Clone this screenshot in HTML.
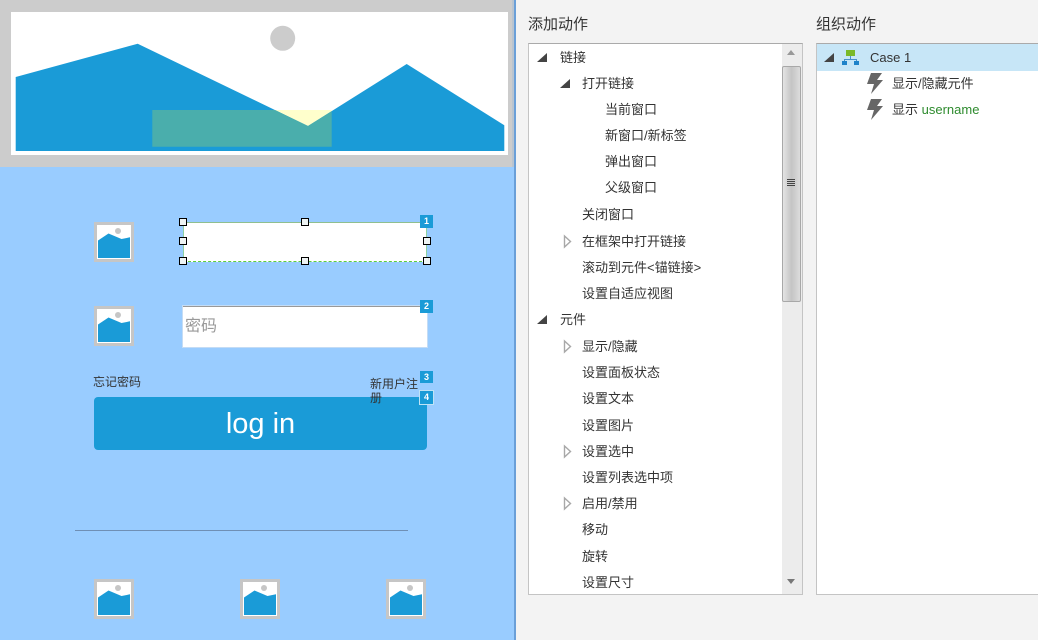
<!DOCTYPE html>
<html lang="zh">
<head>
<meta charset="utf-8">
<style>
html,body{margin:0;padding:0;width:1038px;height:640px;overflow:hidden;background:#f3f3f3}
body{position:relative;font-family:"Liberation Sans","Noto Sans CJK SC",sans-serif;color:#333}
.a{position:absolute}
.t{position:absolute;font-size:13px;line-height:18px;white-space:nowrap;color:#333}
.h{position:absolute;width:6px;height:6px;border:1px solid #000;background:#eef4f4}
.b{position:absolute;left:420px;width:13px;height:13px;background:#1a9bd7;color:#fff;font-size:9px;font-weight:bold;line-height:13px;text-align:center}
svg{position:absolute;left:0;top:0}
</style>
</head>
<body>
<div class="a" style="left:0;top:0;width:514px;height:640px;background:#99ccff"></div>
<div class="a" style="left:514px;top:0;width:2px;height:640px;background:#6a9fd8"></div>
<div class="a" style="left:0;top:0;width:512px;height:167px;background:#cccccc"></div>
<div class="a" style="left:512px;top:0;width:2px;height:167px;background:#b9c4d0"></div>
<div class="a" style="left:11px;top:12px;width:497px;height:143px;background:#fff"></div>

<svg width="1038" height="640" viewBox="0 0 1038 640">
  <defs>
    <g id="pic">
      <rect x="-1" y="0" width="40" height="40" fill="#c6c6c6"/>
      <rect x="2" y="3" width="34" height="34" fill="#fff"/>
      <polygon points="3,18.5 13.5,11.5 26.5,17 35,15.3 35,36 3,36" fill="#1a9bd7"/>
      <circle cx="23" cy="9" r="3" fill="#c6c6c6"/>
    </g>
    <path id="bolt" d="M6 0H17L12 7H18L6 21L9 11H2Z" fill="#666"/>
  </defs>
  <circle cx="282.7" cy="38.3" r="12.5" fill="#cccccc"/>
  <rect x="152.3" y="110" width="179.4" height="36.7" fill="#ffffcc"/>
  <polygon points="15.7,77 137.7,43.7 308,126 406.7,64 504.3,125.3 504.3,151 15.7,151" fill="#1a9bd7"/>
  <polygon points="152.3,110 275,110 308,126 331.7,111.1 331.7,146.7 152.3,146.7" fill="#4aaeac"/>

  <use href="#pic" x="95" y="222"/>
  <use href="#pic" x="95" y="306"/>
  <use href="#pic" x="95" y="579"/>
  <use href="#pic" x="241" y="579"/>
  <use href="#pic" x="387" y="579"/>

  <line x1="75" y1="530.5" x2="408" y2="530.5" stroke="#6f8fb5" stroke-width="1"/>
</svg>

<div class="a" style="left:183px;top:222px;width:244px;height:40px;background:#fff;border-top:1px solid #8fbf8f;border-bottom:1px dashed #5fce3a;box-sizing:border-box;border-left:1px solid #8fd0a0;border-right:1px solid #8fd0a0"></div>
<div class="h" style="left:179px;top:218px"></div>
<div class="h" style="left:301px;top:218px"></div>
<div class="h" style="left:179px;top:237px"></div>
<div class="h" style="left:423px;top:237px"></div>
<div class="h" style="left:179px;top:257px"></div>
<div class="h" style="left:301px;top:257px"></div>
<div class="h" style="left:423px;top:257px"></div>
<div class="b" style="top:215px">1</div>

<div class="a" style="left:183px;top:306px;width:244px;height:41px;background:#fff;border-top:1px solid #999;box-sizing:border-box;box-shadow:0 0 0 1px #c4dcf5"></div>
<div class="t" style="left:185px;top:317px;font-size:16px;line-height:20px;color:#999">密码</div>
<div class="b" style="top:300px">2</div>

<div class="a" style="left:94px;top:397px;width:333px;height:53px;background:#1a9bd7;border-radius:4px"></div>
<div class="a" style="left:94px;top:407px;width:333px;text-align:center;color:#fff;font-size:29px;line-height:34px">log in</div>
<div class="t" style="left:93px;top:374px;font-size:12px;line-height:16px;color:#333">忘记密码</div>
<div class="t" style="left:370px;top:377px;width:48px;white-space:normal;font-size:12px;line-height:14px;color:#333">新用户注册</div>
<div class="b" style="top:371px;height:12px;line-height:12px">3</div>
<div class="b" style="top:391px;box-shadow:0 0 0 1px #bfe3f5">4</div>

<div class="t" style="left:528px;top:15px;font-size:15px;line-height:20px">添加动作</div>
<div class="t" style="left:816px;top:15px;font-size:15px;line-height:20px">组织动作</div>

<div class="a" style="left:528px;top:43px;width:275px;height:552px;background:#fff;border:1px solid #c4c4c4;border-top-color:#aaa;box-sizing:border-box;overflow:hidden">
  <div class="a" style="left:253px;top:0;width:20px;height:552px;background:#ececec"></div>
  <div class="a" style="left:253px;top:22px;width:19px;height:236px;box-sizing:border-box;border:1px solid #a8a8a8;border-radius:2px;background:linear-gradient(90deg,#e4e4e4,#c4c4c4 50%,#dcdcdc)"></div>
  <div class="a" style="left:258px;top:135px;width:8px;height:1px;background:#444;box-shadow:0 2px 0 #444,0 4px 0 #444,0 6px 0 #444"></div>
  <div class="a" style="left:258px;top:6px;width:0;height:0;border-left:4px solid transparent;border-right:4px solid transparent;border-bottom:5px solid #999"></div>
  <div class="a" style="left:258px;top:535px;width:0;height:0;border-left:4px solid transparent;border-right:4px solid transparent;border-top:5px solid #777"></div>
</div>

<div class="a" style="left:816px;top:43px;width:222px;height:552px;background:#fff;border:1px solid #c4c4c4;border-top-color:#aaa;border-right:0;box-sizing:border-box"></div>
<div class="a" style="left:817px;top:44px;width:221px;height:27px;background:#c7e6f7"></div>

<div class="t" style="left:560px;top:49px">链接</div>
<div class="t" style="left:582px;top:75px">打开链接</div>
<div class="t" style="left:605px;top:101px">当前窗口</div>
<div class="t" style="left:605px;top:127px">新窗口/新标签</div>
<div class="t" style="left:605px;top:153px">弹出窗口</div>
<div class="t" style="left:605px;top:179px">父级窗口</div>
<div class="t" style="left:582px;top:206px">关闭窗口</div>
<div class="t" style="left:582px;top:233px">在框架中打开链接</div>
<div class="t" style="left:582px;top:259px">滚动到元件&lt;锚链接&gt;</div>
<div class="t" style="left:582px;top:285px">设置自适应视图</div>
<div class="t" style="left:560px;top:311px">元件</div>
<div class="t" style="left:582px;top:338px">显示/隐藏</div>
<div class="t" style="left:582px;top:364px">设置面板状态</div>
<div class="t" style="left:582px;top:390px">设置文本</div>
<div class="t" style="left:582px;top:417px">设置图片</div>
<div class="t" style="left:582px;top:443px">设置选中</div>
<div class="t" style="left:582px;top:469px">设置列表选中项</div>
<div class="t" style="left:582px;top:495px">启用/禁用</div>
<div class="t" style="left:582px;top:521px">移动</div>
<div class="t" style="left:582px;top:548px">旋转</div>
<div class="t" style="left:582px;top:574px">设置尺寸</div>

<svg width="1038" height="640" viewBox="0 0 1038 640" style="pointer-events:none">
  <polygon points="537,62 547,62 547,53" fill="#444"/>
  <polygon points="560,88 570,88 570,79" fill="#444"/>
  <polygon points="537,324 547,324 547,315" fill="#444"/>
  <g fill="#fff" stroke="#a8a8a8" stroke-width="1.4">
    <polygon points="564.5,236 570.5,241.5 564.5,247"/>
    <polygon points="564.5,341 570.5,346.5 564.5,352"/>
    <polygon points="564.5,446 570.5,451.5 564.5,457"/>
    <polygon points="564.5,498 570.5,503.5 564.5,509"/>
  </g>
  <polygon points="824,62 834,62 834,53" fill="#444"/>
  <rect x="846" y="50" width="9" height="6" fill="#7ab929"/>
  <path d="M850.5 56V59M844.5 62V59.5H856.5V62" fill="none" stroke="#4a90c8" stroke-width="1"/>
  <rect x="842" y="61" width="5" height="4" fill="#1f83c9"/>
  <rect x="854" y="61" width="5" height="4" fill="#1f83c9"/>
  <use href="#bolt" x="865" y="73"/>
  <use href="#bolt" x="865" y="99"/>
</svg>
<div class="t" style="left:870px;top:49px;font-size:13px;color:#333">Case 1</div>
<div class="t" style="left:892px;top:75px">显示/隐藏元件</div>
<div class="t" style="left:892px;top:101px">显示 <span style="color:#2e8b2e;font-size:13px">username</span></div>
</body>
</html>
